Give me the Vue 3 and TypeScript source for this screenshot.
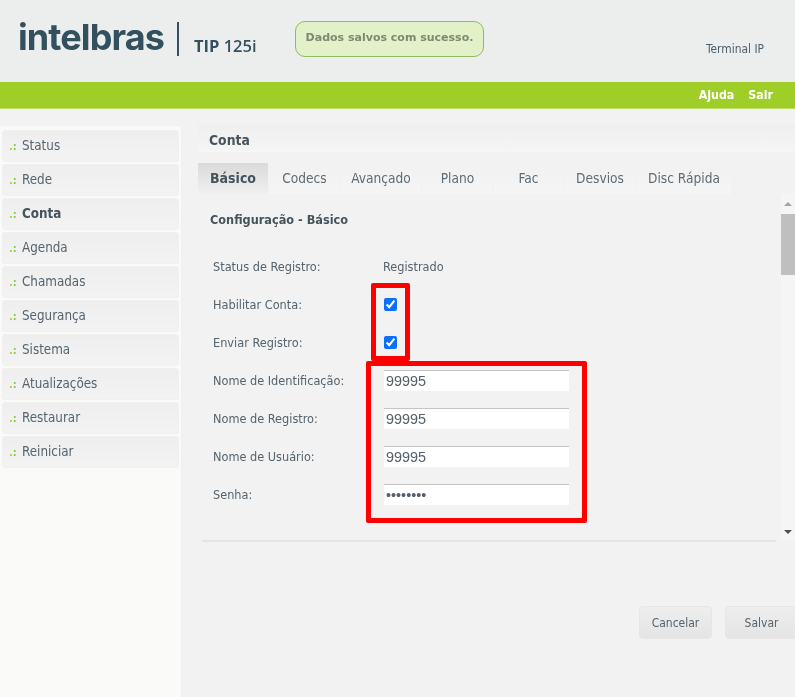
<script setup lang="ts">
const menu: string[] = ['Status', 'Rede', 'Conta', 'Agenda', 'Chamadas', 'Segurança', 'Sistema', 'Atualizações', 'Restaurar', 'Reiniciar']
const tabs: { label: string; width: number }[] = [
  { label: 'Básico', width: 70 },
  { label: 'Codecs', width: 69 },
  { label: 'Avançado', width: 80 },
  { label: 'Plano', width: 69 },
  { label: 'Fac', width: 69 },
  { label: 'Desvios', width: 70 },
  { label: 'Disc Rápida', width: 94 },
]
const fields: { label: string; value: string; type: string }[] = [
  { label: 'Nome de Identificação:', value: '99995', type: 'text' },
  { label: 'Nome de Registro:', value: '99995', type: 'text' },
  { label: 'Nome de Usuário:', value: '99995', type: 'text' },
  { label: 'Senha:', value: '12345678', type: 'password' },
]
</script>

<template>
  <div class="page">
    <header class="top">
      <div class="logo">intelbras</div>
      <div class="sep"></div>
      <div class="model">TIP <span>125i</span></div>
      <div class="toast">Dados salvos com sucesso.</div>
      <div class="terminal">Terminal IP</div>
    </header>
    <nav class="bar">
      <a>Ajuda</a>
      <a>Sair</a>
    </nav>
    <div class="body">
      <aside class="side">
        <div v-for="m in menu" :key="m" class="item" :class="{ on: m === 'Conta' }">
          <span class="dots"><b>.</b>:</span>{{ m }}
        </div>
      </aside>
      <main class="main">
        <div class="title">Conta</div>
        <div class="tabs">
          <div
            v-for="t in tabs"
            :key="t.label"
            class="tab"
            :class="{ active: t.label === 'Básico' }"
            :style="{ width: t.width + 'px' }"
          >{{ t.label }}</div>
        </div>
        <div class="panel">
          <div class="form">
            <h2 class="heading">Configuração - Básico</h2>
            <div class="row"><label>Status de Registro:</label><span>Registrado</span></div>
            <div class="row"><label>Habilitar Conta:</label><input type="checkbox" checked /></div>
            <div class="row"><label>Enviar Registro:</label><input type="checkbox" checked /></div>
            <div v-for="f in fields" :key="f.label" class="row">
              <label>{{ f.label }}</label>
              <input class="field" :type="f.type" :value="f.value" />
            </div>
          </div>
          <div class="scroll">
            <i class="up"></i>
            <div class="track"><div class="thumb"></div></div>
            <i class="down"></i>
          </div>
          <div class="mark mark-a"></div>
          <div class="mark mark-b"></div>
        </div>
        <div class="rule"></div>
        <div class="actions">
          <button>Cancelar</button>
          <button>Salvar</button>
        </div>
      </main>
    </div>
  </div>
</template>

<style>
html, body { margin: 0; background: #f2f2f2; overflow: hidden; }
</style>

<style scoped>
.page {
  width: 795px;
  height: 697px;
  overflow: hidden;
  display: flex;
  flex-direction: column;
  font-family: "DejaVu Sans Condensed", "DejaVu Sans", sans-serif;
  font-stretch: condensed;
  font-size: 12.6px;
  color: #55636d;
  background: #f2f2f2;
  filter: blur(0.3px);
}
.top {
  height: 82px;
  flex: none;
  background: #eceeee;
  display: flex;
  align-items: flex-start;
  box-sizing: border-box;
}
.logo {
  margin: 13px 0 0 18px;
  font-family: "Inter", sans-serif;
  font-stretch: normal;
  font-weight: 700;
  font-size: 36px;
  line-height: 48px;
  letter-spacing: -0.9px;
  color: #33505f;
  width: 146px;
  height: 48px;
  white-space: nowrap;
}
.sep {
  width: 2px;
  height: 34px;
  margin: 22px 0 0 13px;
  background: #33505f;
}
.model {
  margin: 37px 0 0 15px;
  width: 100px;
  font-family: "Open Sans", sans-serif;
  font-stretch: normal;
  font-weight: 700;
  font-size: 16.5px;
  line-height: 18px;
  color: #33505f;
  white-space: nowrap;
}
.model span { font-weight: 600; }
.toast {
  margin: 21px 0 0 1px;
  width: 189px;
  height: 36px;
  box-sizing: border-box;
  border: 1.5px solid #8fbb62;
  border-radius: 10px;
  background: #e2f1c7;
  color: #7d8a72;
  font-family: "DejaVu Sans", sans-serif;
  font-stretch: normal;
  font-weight: 700;
  font-size: 11px;
  line-height: 31px;
  text-align: center;
  white-space: nowrap;
}
.terminal {
  margin: 42px 0 0 222px;
  font-size: 11.9px;
  line-height: 14px;
  color: #4f5e69;
  white-space: nowrap;
}
.bar {
  height: 27px;
  flex: none;
  background: #9fce29;
  border-bottom: 1px solid #bfe06a;
  box-sizing: border-box;
  display: flex;
  justify-content: flex-end;
  align-items: center;
  gap: 14px;
  padding: 0 22px 0 0;
  color: #fff;
  font-weight: 700;
  font-size: 12.3px;
}
.body {
  flex: 1;
  display: flex;
  min-height: 0;
  padding-top: 16px;
}
.side {
  width: 182px;
  flex: none;
  background: #fafaf8;
  box-sizing: border-box;
  padding: 4px 2px 0 2px;
  border-right: 1px solid #f0f0f0;
  border-top: 1px solid #f0f0f0;
  display: flex;
  flex-direction: column;
  gap: 2px;
}
.item {
  height: 32px;
  flex: none;
  box-sizing: border-box;
  padding-left: 6px;
  background: linear-gradient(#eeeeee, #f3f3f3);
  border: 1px solid #f0f0ee;
  border-radius: 3px;
  font-size: 13.3px;
  line-height: 29px;
  color: #56646e;
}
.item.on { font-weight: 700; color: #45535d; }
.dots {
  display: inline-block;
  width: 13px;
  font-weight: 700;
  font-size: 11px;
  color: #7fd04a;
}
.dots b { color: #c9c23a; }
.main {
  flex: 1;
  min-width: 0;
  padding-left: 16px;
  display: flex;
  flex-direction: column;
}
.title {
  height: 27px;
  flex: none;
  background: linear-gradient(#efefef, #f5f5f5);
  border-bottom: 1px solid #f7f7f7;
  box-sizing: border-box;
  padding-left: 11px;
  font-size: 13.8px;
  line-height: 30px;
  font-weight: 700;
  color: #45535d;
}
.tabs {
  display: flex;
  gap: 2px;
  margin-top: 11px;
  flex: none;
}
.tab {
  height: 31px;
  box-sizing: border-box;
  background: linear-gradient(#f1f1f1, #f5f5f5);
  text-align: center;
  font-size: 13.6px;
  line-height: 30px;
  color: #5d6b74;
  flex: none;
}
.tab.active {
  background: linear-gradient(#dadada, #f0f0f0);
  font-weight: 700;
  font-size: 14px;
  color: #45535d;
}
.panel {
  position: relative;
  height: 346px;
  flex: none;
  display: flex;
}
.form { flex: 1; padding: 0 0 0 12px; }
.heading {
  margin: 0;
  padding-top: 17px;
  height: 19px;
  font-size: 12.6px;
  line-height: 17px;
  font-weight: 700;
  color: #45535d;
}
.row {
  height: 38px;
  display: flex;
  align-items: center;
  padding-left: 3px;
  white-space: nowrap;
}
.heading + .row { margin-top: 17px; }
.row label { width: 170px; flex: none; }
.row input[type="checkbox"] {
  width: 13px;
  height: 13px;
  margin: 0 0 0 1px;
  accent-color: #0b6ffb;
}
.field {
  width: 185px;
  height: 21px;
  margin-left: 1px;
  box-sizing: border-box;
  border: 0;
  border-top: 1px solid #c4c4c4;
  background: #fff;
  padding: 0 2px;
  font: 14.4px "Liberation Sans", sans-serif;
  color: #55606a;
  outline: none;
}
.scroll {
  width: 14px;
  flex: none;
  display: flex;
  flex-direction: column;
  align-items: center;
  background: #f5f5f5;
}
.up, .down { display: block; width: 0; height: 0; border-left: 4px solid transparent; border-right: 4px solid transparent; }
.up { margin: 8px 0 8px; border-bottom: 4px solid #a3a3a3; }
.down { margin: 0 0 6px; border-top: 4px solid #505050; }
.track { flex: 1; width: 100%; }
.thumb { height: 61px; background: #bfbfbf; }
.mark {
  position: absolute;
  box-sizing: border-box;
  border: 5px solid #fe0000;
  border-radius: 2px;
  pointer-events: none;
}
.mark-a { left: 173px; top: 89px; width: 39px; height: 78px; }
.mark-b { left: 168px; top: 167px; width: 221px; height: 162px; }
.rule {
  height: 2px;
  width: 574px;
  margin-left: 4px;
  background: #e4e4e4;
  flex: none;
}
.actions {
  display: flex;
  gap: 13px;
  margin: 64px 0 0 441px;
  flex: none;
}
.actions button {
  width: 73px;
  height: 33px;
  flex: none;
  border: 1px solid #e6e6e6;
  border-radius: 4px;
  background: linear-gradient(#eeeeee, #e4e4e4);
  font: inherit;
  font-size: 12px;
  color: #55636d;
  padding: 0;
}
</style>
